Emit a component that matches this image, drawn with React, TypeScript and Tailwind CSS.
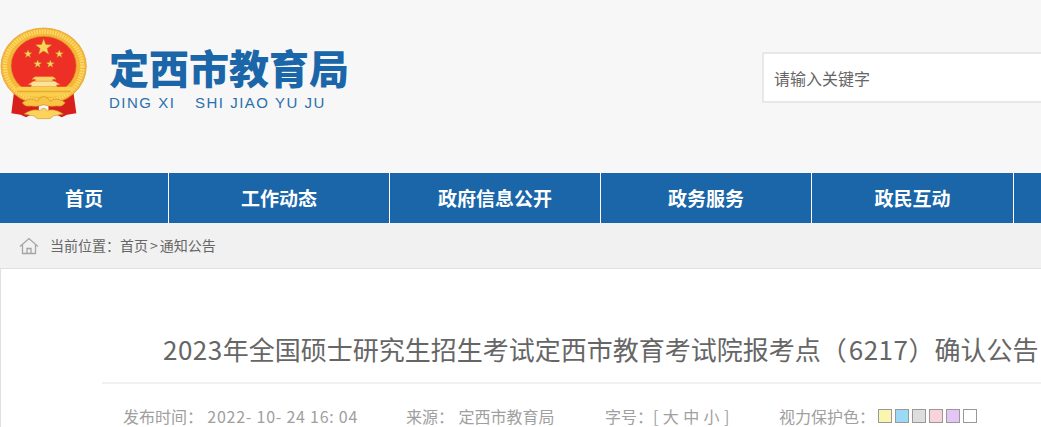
const cjk = '"Noto Sans CJK SC","Liberation Sans",sans-serif';

function Star({ cx, cy, r }: { cx: number; cy: number; r: number }) {
  const pts: string[] = [];
  for (let i = 0; i < 10; i++) {
    const a = (-90 + i * 36) * (Math.PI / 180);
    const q = i % 2 === 0 ? r : r * 0.42;
    pts.push(`${(cx + q * Math.cos(a)).toFixed(1)},${(cy + q * Math.sin(a)).toFixed(1)}`);
  }
  return <polygon points={pts.join(" ")} fill="#fbd35c" stroke="#b8741c" strokeWidth="1.2" />;
}

function Emblem() {
  return (
    <svg width="95" height="105" viewBox="0 0 285 315" className="shrink-0 block">
      <path d="M42 215 L34 280 L62 284 L78 292 L116 272 L118 240 L70 225 Z" fill="#d8201a" />
      <path d="M220 215 L229 280 L201 284 L185 292 L146 272 L144 240 L192 225 Z" fill="#d8201a" />
      <ellipse cx="131" cy="139" rx="128" ry="115" fill="#f4b836" stroke="#dc9a2c" strokeWidth="2" />
      <ellipse cx="131" cy="139" rx="116" ry="104" fill="none" stroke="#fdd868" strokeWidth="13" strokeDasharray="5 3" />
      <ellipse cx="131" cy="137" rx="98" ry="88" fill="#ee2f25" stroke="#d89a30" strokeWidth="2" />
      <Star cx={131} cy={82} r={26} />
      <Star cx={84} cy={102} r={13} />
      <Star cx={178} cy={102} r={13} />
      <Star cx={113} cy={132} r={13} />
      <Star cx={151} cy={132} r={13} />
      <path d="M104 170 H160 L168 178 H158 V184 H106 V178 H96 Z" fill="#f8cf6a" stroke="#d9972c" strokeWidth="1" />
      <path d="M100 184 H164 L180 194 H170 V200 H94 V194 H84 Z" fill="#fbe39a" stroke="#d9972c" strokeWidth="1" />
      <path d="M55 200 H208 Q224 208 226 200 Q214 232 131 230 Q50 232 38 200 Q42 208 55 200 Z" fill="#fbcf4e" />
      <rect x="52" y="212" width="160" height="5" fill="#e9ad35" />
      <path d="M66 248 Q96 228 112 244 Q131 214 150 244 Q168 228 196 248 Q186 262 170 258 Q150 262 131 254 Q112 262 92 258 Q76 262 66 248 Z" fill="#f8c444" stroke="#bf7f1f" strokeWidth="1.5" />
      <path d="M72 282 Q100 264 120 272 Q131 258 142 272 Q162 264 190 282 L160 288 L150 296 H112 L102 288 Z" fill="#fbd25a" stroke="#bf7f1f" strokeWidth="1.5" />
    </svg>
  );
}

function Nav() {
  const items = [
    { t: "首页", w: "w-[168px]" },
    { t: "工作动态", w: "w-[220px]" },
    { t: "政府信息公开", w: "w-[210px]" },
    { t: "政务服务", w: "w-[210px]" },
    { t: "政民互动", w: "w-[201px]" },
  ];
  return (
    <nav className="flex h-[50px] bg-[#1a66a8] shrink-0">
      {items.map((it) => (
        <div key={it.t} className={`${it.w} shrink-0 border-r border-white flex items-center justify-center box-content text-white text-[19px] font-bold`}>
          {it.t}
        </div>
      ))}
    </nav>
  );
}

export default function App() {
  return (
    <div className="w-[1041px] h-[427px] overflow-hidden flex flex-col bg-[#f7f7f7]" style={{ fontFamily: cjk }}>
      <header className="h-[173px] shrink-0 flex justify-between">
        <div className="flex items-start pt-[20px]">
          <Emblem />
          <div className="ml-[14px] pt-[22px]">
            <div className="text-[40px] leading-[50px] font-black text-[#1a66a8] whitespace-nowrap">定西市教育局</div>
            <div className="flex text-[15px] leading-[20px] tracking-[1.5px] text-[#2a70ad] whitespace-nowrap mt-[1px]" style={{ fontFamily: '"Liberation Sans",sans-serif' }}>
              <span className="w-[86px]">DING XI</span>
              <span>SHI JIAO YU JU</span>
            </div>
          </div>
        </div>
        <div className="mt-[52px] w-[279px] h-[51px] bg-white border-2 border-r-0 border-[#e8e8e8] flex items-center pl-[10px] text-[16px] text-[#666]">请输入关键字</div>
      </header>
      <Nav />
      <div className="h-[45px] shrink-0 bg-[#f1f1f1] flex items-center pl-[19px] text-[14px] text-[#666]">
        <svg width="20" height="18" viewBox="0 0 20 18" fill="none" stroke="#a5a5a5" strokeWidth="1.3" className="mr-[11px]">
          <path d="M1 9.5 L10 1.5 L19 9.5" />
          <path d="M3.5 8 V16.5 H16.5 V8" />
          <path d="M8 16.5 V11.5 H12 V16.5" />
        </svg>
        <span>当前位置：首页<span className="px-[2px]">&gt;</span>通知公告</span>
      </div>
      <main className="flex-1 bg-white border-t border-l border-[#e0e0e0] pl-[101px]">
        <h1 className="pt-[60px] pl-[61px] text-[26px] leading-[40px] text-[#666] whitespace-nowrap h-[115px] border-b-2 border-[#f1f1f1] font-normal [text-spacing-trim:space-all]">
          <span className="tracking-[0.5px]">2023</span>年全国硕士研究生招生考试定西市教育考试院报考点（<span className="tracking-[0.5px] ml-[2px]">6217</span>）确认公告
        </h1>
        <div className="flex items-center pt-[20px] pl-[21px] text-[16px] leading-[24px] text-[#a0a0a0] whitespace-pre">
          <span className="w-[283px]">发布时间：<span className="tracking-[0.75px]"> 2022- 10- 24 16: 04</span></span>
          <span className="w-[199px]">来源：<span className="ml-[1px]"> 定西市教育局</span></span>
          <span className="w-[174px]">字号：<span className="tracking-[0.4px]">[ 大 中 小 ]</span></span>
          <span>视力保护色：</span>
          <div className="flex gap-[3px] ml-[3px]">
            {["bg-[#faf6b0]", "bg-[#9cd9f5]", "bg-[#dddddd]", "bg-[#f8d3dc]", "bg-[#e3c6f5]", "bg-white"].map((c) => (
              <span key={c} className={`${c} w-[14px] h-[14px] border border-[#999]`} />
            ))}
          </div>
        </div>
      </main>
    </div>
  );
}
